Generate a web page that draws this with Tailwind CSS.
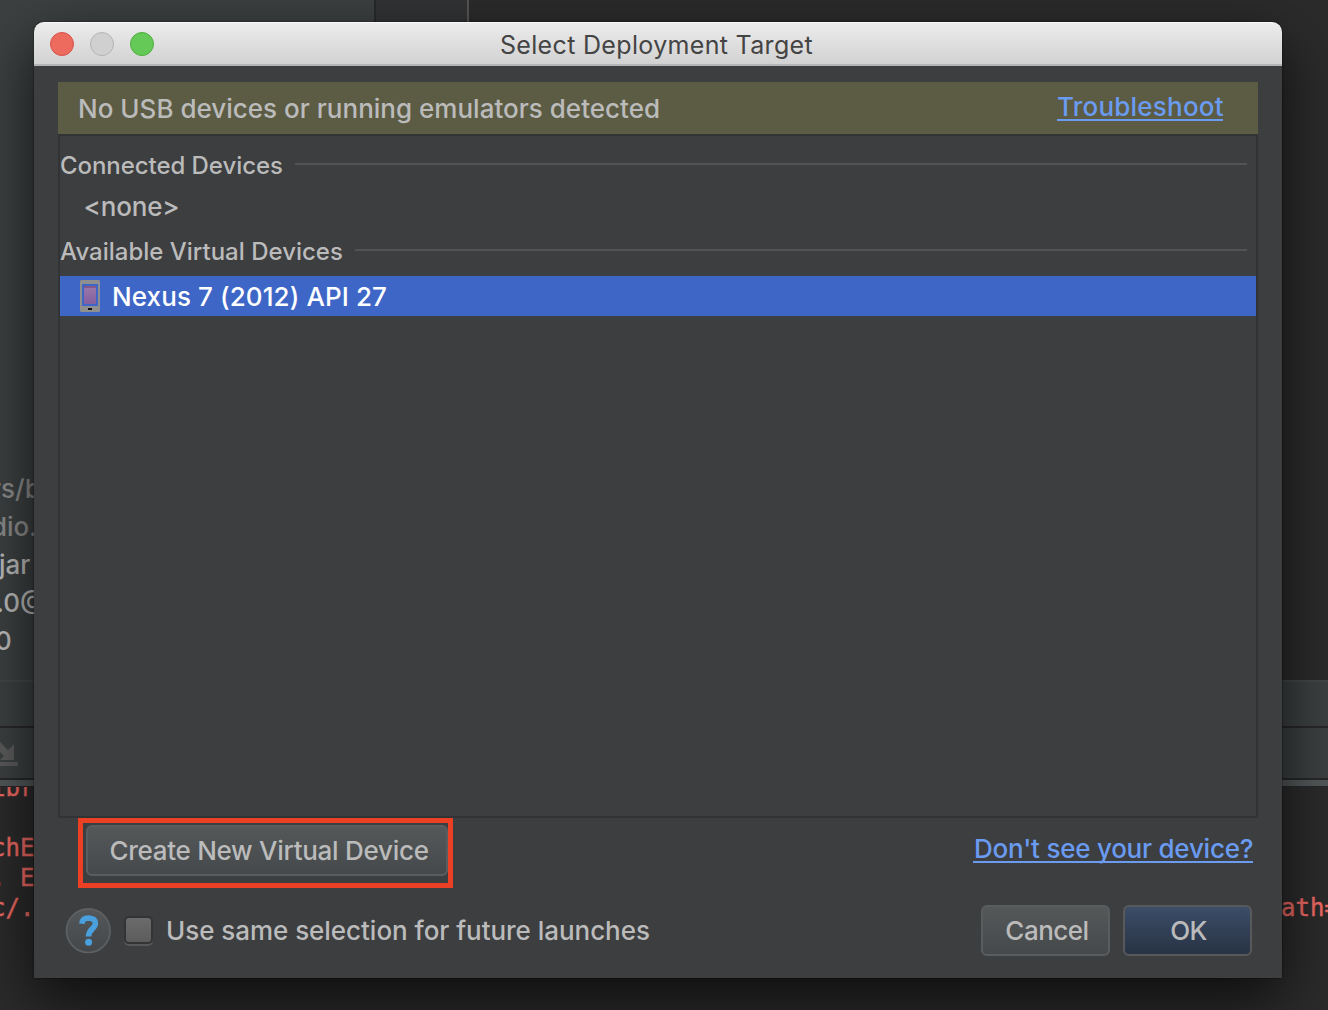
<!DOCTYPE html>
<html lang="en">
<head>
<meta charset="utf-8">
<title>Select Deployment Target</title>
<script src="https://cdn.jsdelivr.net/npm/@tailwindcss/browser@4"></script>
</head>
<body class="relative h-[1010px] w-[1328px] overflow-hidden bg-[#2b2b2b] font-['Inter',sans-serif] text-[26px] leading-[38px] font-[450] whitespace-nowrap">

<!-- IDE behind the dialog -->
<main class="flex h-full flex-col">
  <div class="flex h-[680px]">
    <aside class="w-[376px] overflow-hidden border-r-2 border-[#28292a] bg-[#3c4041] pt-[470px] text-[#bbbbbb]">
      <div class="-ml-[9px] text-[#8c8c8c]">rs/b</div>
      <div class="-ml-[9px] text-[#8c8c8c]">dio.</div>
      <div class="-ml-[1px]">jar</div>
      <div class="-ml-[4px]">.0@</div>
      <div class="-ml-[5px]">0</div>
    </aside>
    <div class="w-[93px] border-r-2 border-[#555555] bg-[#313335]"></div>
    <div class="flex-1 bg-[#2b2b2b]"></div>
  </div>
  <div class="h-12 border-t-2 border-b-2 border-t-[#444748] border-b-[#282828] bg-[#3c4041]"></div>
  <div class="h-[52px] border-b-2 border-[#282828] bg-[#3c4041] pt-[14px]">
    <svg class="h-6 w-[18px]" viewBox="0 0 18 24" fill="#5b5b5b"><path d="M0 0l8 8 6-6v16H0l4-4-4-4zM0 20h18v4H0z"/></svg>
  </div>
  <div class="h-[7px] border-b border-[#282828] bg-[#53585a]"></div>
  <section class="flex flex-1 justify-between overflow-hidden bg-[#2b2b2b] font-['DejaVu_Sans_Mono',monospace] text-[24px] leading-[30px] font-normal text-[#f06a64] [-webkit-text-stroke:0.4px_#f06a64]">
    <div class="-mt-[14px] -ml-[9px] h-[150px]">
      <div>ibr</div>
      <div>&nbsp;</div>
      <div>chE</div>
      <div>. E</div>
      <div>c/.</div>
    </div>
    <div class="w-[47px] overflow-hidden pt-[106px]">ath=</div>
  </section>
</main>

<!-- Dialog -->
<div role="dialog" class="absolute top-[22px] left-[34px] flex h-[956px] w-[1248px] flex-col rounded-t-[10px] bg-[#3d3e40] text-[#bbbbbb] shadow-[0_0_2px_rgba(0,0,0,0.7),0_22px_60px_rgba(0,0,0,0.7)]">
  <header class="relative flex h-11 items-center justify-center rounded-t-[10px] border-t border-b-2 border-t-[#f8f8f8] border-b-[#b4b5b6] bg-linear-to-b from-[#ececec] to-[#d2d2d2]">
    <div class="absolute top-[9px] left-4 flex gap-4">
      <span class="size-6 rounded-full border border-[#d9514a] bg-[#ec6a5e]"></span>
      <span class="size-6 rounded-full border border-[#b4b4b4] bg-[#d0d0d0]"></span>
      <span class="size-6 rounded-full border border-[#4fae3e] bg-[#65c958]"></span>
    </div>
    <h1 class="mt-[2px] mr-[3px] text-[25px] font-normal tracking-[0.33px] text-[#444444]">Select Deployment Target</h1>
  </header>

  <div class="flex flex-1 flex-col px-6 pt-4">
    <div class="flex h-[52px] justify-between bg-[#5c5b44] pr-[35px] pl-5">
      <span class="pt-[8px] tracking-[0.01px]">No USB devices or running emulators detected</span>
      <a class="mt-[6px] h-[33px] w-[166px] border-b-2 border-[#6a9bf0] tracking-[0.22px] text-[#6a9bf0]">Troubleshoot</a>
    </div>

    <div class="h-[684px] border-2 border-[#323335] text-[#bbbbbb]">
      <div class="mt-[10px] flex h-[38px] items-center pr-[9px] text-[24px]">
        <span class="mt-[2px] w-[235px] tracking-[-0.06px]">Connected Devices</span>
        <span class="mb-[2px] h-[2px] flex-1 bg-[#515355]"></span>
      </div>
      <div class="mt-[4px] pl-[23.5px] tracking-[-0.15px]">&lt;none&gt;</div>
      <div class="mt-[6px] flex h-[38px] items-center pr-[9px] text-[24px]">
        <span class="mt-[2px] w-[295px]">Available Virtual Devices</span>
        <span class="mb-[2px] h-[2px] flex-1 bg-[#515355]"></span>
      </div>
      <div class="mt-[6px] flex h-10 items-center bg-[#3e66c6] pl-5 text-white">
        <svg class="h-8 w-5" viewBox="0 0 20 32">
          <defs><linearGradient id="screen" x1="0" y1="0" x2="0" y2="1"><stop stop-color="#9a79aa"/><stop offset="1" stop-color="#855f9f"/></linearGradient></defs>
          <path fill="#8f8f8f" fill-rule="evenodd" d="M1 0h18l1 1v30l-1 1H1l-1-1V1zM2 4v22h16V4z"/>
          <path fill="url(#screen)" d="M4 6h12v18H4z"/>
          <path fill="#84568c" d="M4 6h12v2H4z"/>
          <path fill="#111" d="M8 28h4v2H8z"/>
        </svg>
        <span class="mt-[2px] ml-3 font-medium tracking-[0.1px]">Nexus 7 (2012) API 27</span>
      </div>
    </div>

    <div class="flex h-[70px] justify-between pr-[5px] pl-5">
      <div class="flex h-[70px] w-[375px] border-[5px] border-[#eb4024] pt-[2px] pl-[3px]">
        <button class="h-[51px] w-[362px] rounded-[6px] border-2 border-[#5a5d5f] bg-linear-to-b from-[#545859] to-[#45494b] pl-[4px] tracking-[-0.28px]">Create New Virtual Device</button>
      </div>
      <a class="mt-[12px] h-[33px] w-[280px] border-b-2 border-[#6a9bf0] pl-px tracking-[-0.24px] text-[#6a9bf0]">Don't see your device?</a>
    </div>

    <div class="mt-[17px] flex h-[51px] items-center pr-[6px] pl-[7px]">
      <svg class="size-[46px]" viewBox="0 0 46 46">
        <defs><linearGradient id="help" x1="0" y1="0" x2="0" y2="1"><stop stop-color="#54585a"/><stop offset="1" stop-color="#43474a"/></linearGradient></defs>
        <circle cx="23.3" cy="22.7" r="21.8" fill="url(#help)" stroke="#5f6162" stroke-width="1.6"/>
        <path d="M16.8 15.8Q17.4 10 23.6 10Q30.4 10.2 30.4 15.6C30.4 20.8 23.6 20.6 23.6 28.4" fill="none" stroke="#4a9fdd" stroke-width="5.6"/>
        <circle cx="23.6" cy="34.3" r="3.5" fill="#4a9fdd"/>
      </svg>
      <span class="mt-[-1px] ml-[13px] h-[28px] w-[29px] rounded-[5px] border-2 border-[#333436] bg-linear-to-b from-[#6b6b6b] to-[#5c5c5c] shadow-[0_2px_0_#56585a]"></span>
      <span class="ml-[13px] tracking-[-0.04px]">Use same selection for future launches</span>
      <button class="ml-auto h-[51px] w-[129px] rounded-[6px] border-2 border-[#5a5d5f] bg-linear-to-b from-[#545859] to-[#45494b] pl-[3px] tracking-[-0.5px]">Cancel</button>
      <button class="ml-[13px] h-[51px] w-[129px] rounded-[6px] border-2 border-[#57595b] bg-linear-to-b from-[#3c4d68] to-[#283345] pl-[2px] tracking-[-0.6px]">OK</button>
    </div>
  </div>
</div>
</body>
</html>
